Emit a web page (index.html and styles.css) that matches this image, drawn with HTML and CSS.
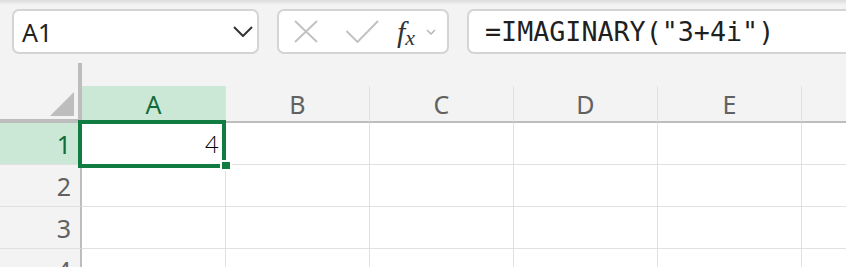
FILE: index.html
```html
<!DOCTYPE html>
<html>
<head>
    <title>IMAGINARY</title>
    <link rel="stylesheet" href="styles.css">
</head>
<body>
    <div class="formula-row">
        <div class="name-box">
            <span class="cell-ref">A1</span>
            <svg class="chevron" width="20" height="11" viewBox="0 0 20 11"><path d="M1 1 L10 10 L19 1" fill="none" stroke="#333" stroke-width="2"/></svg>
        </div>
        <div class="fx-box">
            <svg class="cancel" width="24" height="23" viewBox="0 0 24 23"><path d="M1 1 L23 22 M23 1 L1 22" fill="none" stroke="#c2c2c2" stroke-width="2"/></svg>
            <svg class="enter" width="33" height="23" viewBox="0 0 33 23"><path d="M0.5 11 L11.5 22 L32 1" fill="none" stroke="#c2c2c2" stroke-width="2"/></svg>
            <span class="fx"><i>f</i><i class="sub">x</i></span>
            <svg class="small-chevron" width="10" height="6" viewBox="0 0 10 6"><path d="M1 1 L5 5 L9 1" fill="none" stroke="#b0b0b0" stroke-width="1.3"/></svg>
        </div>
        <div class="formula">=IMAGINARY("3+4i")</div>
    </div>

    <div class="sheet">
        <div class="corner">
            <svg width="24" height="24" viewBox="0 0 24 24"><polygon points="24,0 24,24 0,24" fill="#bdbdbd"/></svg>
        </div>
        <div class="col-head active">A</div>
        <div class="col-head">B</div>
        <div class="col-head">C</div>
        <div class="col-head">D</div>
        <div class="col-head">E</div>
        <div class="col-head"></div>

        <div class="row-head active">1</div>
        <div class="cell selected">4<span class="selection"><span class="handle"></span></span></div>
        <div class="cell"></div>
        <div class="cell"></div>
        <div class="cell"></div>
        <div class="cell"></div>
        <div class="cell"></div>

        <div class="row-head">2</div>
        <div class="cell"></div>
        <div class="cell"></div>
        <div class="cell"></div>
        <div class="cell"></div>
        <div class="cell"></div>
        <div class="cell"></div>

        <div class="row-head">3</div>
        <div class="cell"></div>
        <div class="cell"></div>
        <div class="cell"></div>
        <div class="cell"></div>
        <div class="cell"></div>
        <div class="cell"></div>

        <div class="row-head">4</div>
        <div class="cell"></div>
        <div class="cell"></div>
        <div class="cell"></div>
        <div class="cell"></div>
        <div class="cell"></div>
        <div class="cell"></div>
    </div>
</body>
</html>
```

FILE: styles.css
```css
* {
    box-sizing: border-box;
}
body {
    margin: 0;
    height: 100vh;
    overflow: hidden;
    font-family: "Noto Sans", sans-serif;
    background: #f3f3f3 linear-gradient(#dcdcdc, #f3f3f3) no-repeat;
    background-size: 100% 5px;
}
.formula-row {
    display: flex;
    gap: 18px;
    height: 54px;
    padding: 9px 0 0 12px;
    margin-right: -12px;
}
.name-box,
.fx-box,
.formula {
    background: #fff;
    border: 2px solid #d4d4d4;
    border-radius: 7px;
    display: flex;
    align-items: center;
}
.name-box {
    width: 247px;
    justify-content: space-between;
    padding: 0 4px 0 8px;
}
.cell-ref {
    font-size: 25px;
    color: #222;
}
.fx-box {
    width: 172px;
    padding-left: 15px;
}
.enter {
    margin-left: 28px;
}
.fx {
    margin-left: 18px;
    font-family: "Liberation Serif", serif;
    font-size: 30px;
    color: #333;
    line-height: 1;
}
.fx .sub {
    font-size: 22px;
    position: relative;
    top: 3px;
}
.small-chevron {
    margin-left: 11px;
}
.formula {
    flex: 1;
    padding-left: 16px;
    font-family: "DejaVu Sans Mono", monospace;
    font-size: 26.7px;
    color: #1f1f1f;
}
.sheet {
    display: grid;
    grid-template-columns: 82px repeat(6, 144px);
    grid-template-rows: 60px repeat(4, 42px);
    margin-top: 9px;
}
.corner {
    border-right: 4px solid #bdbdbd;
    border-bottom: 4px solid #bdbdbd;
    display: flex;
    align-items: flex-end;
    justify-content: flex-end;
    padding: 0 4px 3px 0;
}
.col-head {
    align-self: end;
    height: 37px;
    border-right: 1px solid #e1e1e1;
    border-bottom: 2px solid #bdbdbd;
    display: flex;
    align-items: center;
    justify-content: center;
    font-size: 25px;
    color: #616161;
}
.col-head.active,
.row-head.active {
    background: #cae8d5;
    color: #0f6b38;
}
.row-head {
    border-right: 2px solid #bdbdbd;
    border-bottom: 1px solid #e1e1e1;
    display: flex;
    align-items: center;
    justify-content: flex-end;
    padding-right: 9px;
    font-size: 25px;
    color: #616161;
}
.cell {
    background: #fff;
    border-right: 1px solid #e1e1e1;
    border-bottom: 1px solid #e1e1e1;
}
.cell.selected {
    position: relative;
    display: flex;
    align-items: center;
    justify-content: flex-end;
    padding-right: 6px;
    font-family: Lato, sans-serif;
    font-weight: 300;
    font-size: 24px;
    color: #000;
}
.selection {
    position: absolute;
    top: -3px;
    left: -4px;
    right: -1px;
    bottom: -4px;
    border: 4px solid #107c41;
}
.handle {
    position: absolute;
    right: -8px;
    bottom: -5px;
    width: 8px;
    height: 7px;
    background: #107c41;
    box-shadow: 0 0 0 2px #fff;
}
```
